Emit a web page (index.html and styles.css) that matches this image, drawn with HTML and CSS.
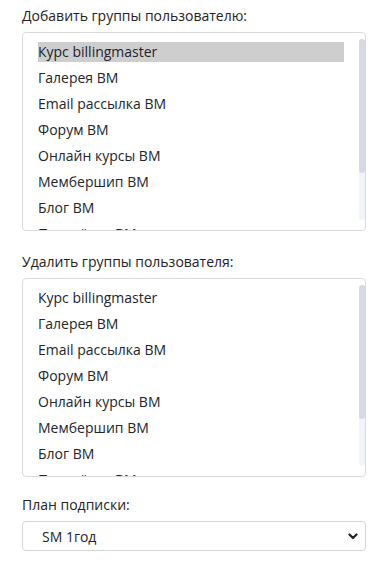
FILE: index.html
```html
<!DOCTYPE html>
<html>
<head>
    <meta name="viewport" content="width=device-width, initial-scale=1.0">
    <link rel="stylesheet" href="styles.css">
</head>
<body>
    <div class="field">
        <div class="label">Добавить группы пользователю:</div>
        <div class="listbox">
            <div class="options">
                <div class="option selected">Курс billingmaster</div>
                <div class="option">Галерея BM</div>
                <div class="option">Email рассылка BM</div>
                <div class="option">Форум BM</div>
                <div class="option">Онлайн курсы BM</div>
                <div class="option">Мембершип BM</div>
                <div class="option">Блог BM</div>
                <div class="option">Партнёрка BM</div>
            </div>
            <div class="scrollbar"><div class="thumb"></div></div>
        </div>
    </div>

    <div class="field field-last-list">
        <div class="label">Удалить группы пользователя:</div>
        <div class="listbox">
            <div class="options">
                <div class="option">Курс billingmaster</div>
                <div class="option">Галерея BM</div>
                <div class="option">Email рассылка BM</div>
                <div class="option">Форум BM</div>
                <div class="option">Онлайн курсы BM</div>
                <div class="option">Мембершип BM</div>
                <div class="option">Блог BM</div>
                <div class="option">Партнёрка BM</div>
            </div>
            <div class="scrollbar"><div class="thumb"></div></div>
        </div>
    </div>

    <div class="field">
        <div class="label">План подписки:</div>
        <div class="select">
            <span>SM 1год</span>
            <svg class="chevron" width="10" height="7" viewBox="0 0 10 7">
                <path d="M1.5 1.5 L5 5 L8.5 1.5" fill="none" stroke="#222" stroke-width="2.2" stroke-linecap="round" stroke-linejoin="round"/>
            </svg>
        </div>
    </div>
</body>
</html>
```

FILE: styles.css
```css
body {
    margin: 0;
    padding: 4px 17px 0 22px;
    font-family: "Open Sans", Arial, sans-serif;
    font-size: 14px;
    color: #212529;
    background-color: #fff;
}

.field {
    margin-bottom: 19px;
}

.field-last-list {
    margin-bottom: 16px;
}

.label {
    height: 24px;
    line-height: 24px;
    margin-bottom: 4px;
    color: #222;
}

.listbox {
    height: 199px;
    box-sizing: border-box;
    border: 1px solid #dadada;
    border-radius: 4px;
    display: flex;
    padding: 9px 0 0 15px;
    overflow: hidden;
}

.options {
    width: 307px;
}

.option {
    height: 20px;
    line-height: 20px;
    margin-bottom: 6px;
    white-space: nowrap;
}

.selected {
    background-color: #cecece;
}

.scrollbar {
    width: 6px;
    margin: -3px 0 10px 15px;
    border-radius: 3px;
    background-color: #f2f4fb;
    height: 181px;
}

.thumb {
    height: 134px;
    border-radius: 3px;
    background-color: #d6d8e6;
}

.select {
    height: 30px;
    box-sizing: border-box;
    border: 1px solid #d4d4d4;
    border-radius: 4px;
    display: flex;
    align-items: center;
    justify-content: space-between;
    padding: 0 7px 0 19px;
}

.chevron {
    display: block;
}
```
